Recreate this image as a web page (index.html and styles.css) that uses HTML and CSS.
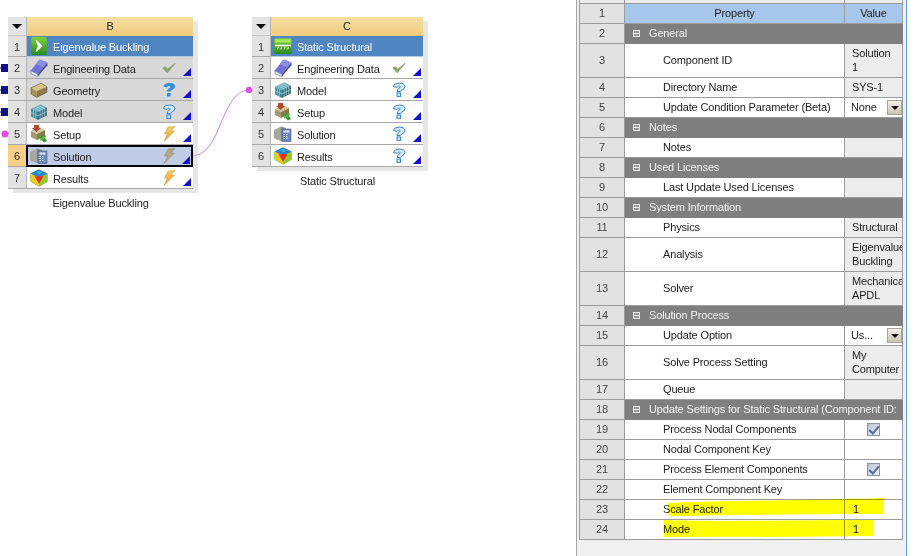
FILE: index.html
```html
<!DOCTYPE html>
<html lang="en">
<head>
<meta charset="utf-8">
<title>Project Schematic</title>
<link rel="stylesheet" href="styles.css">
</head>
<body>
<svg class="defs" width="0" height="0">
  <defs>
    <linearGradient id="gGreen" x1="0" y1="0" x2="0" y2="1"><stop offset="0" stop-color="#7ed03a"/><stop offset="1" stop-color="#2a8a22"/></linearGradient>
    <linearGradient id="gBolt" x1="0" y1="0" x2="0" y2="1"><stop offset="0" stop-color="#f8d070"/><stop offset="1" stop-color="#e49a28"/></linearGradient>
    <symbol id="i-eigen" viewBox="0 0 16 16"><rect x="1" y="0" width="14" height="16" rx="2" fill="url(#gGreen)"/><path d="M5.5 3 L10.5 8 L5.5 13 L7.5 8Z" fill="#fff" stroke="#fff" stroke-width="1"/></symbol>
    <symbol id="i-static" viewBox="0 0 16 16"><rect x="0" y="1" width="16" height="14" rx="2" fill="url(#gGreen)"/><rect x="1" y="2" width="14" height="3" fill="#a8e860"/><path d="M1 7.5H15" stroke="#f4fff0" stroke-width="1.4"/><path d="M3 11l1-2.5M6 11l1-2.5M9 11l1-2.5M12 11l1-2.5" stroke="#e8ffd0" stroke-width="1"/></symbol>
    <symbol id="i-book" viewBox="0 0 16 16"><path d="M0.5 10.5 L8.5 0.5 L15.5 3 L7 13.5 Z" fill="#7272d4"/><path d="M8.5 0.5 L15.5 3 L12 7.5 L5 4.5Z" fill="#8e8ee4"/><path d="M0.5 10.5 L7 13.5 L7 15.6 L1.2 13.4 Z" fill="#eeeef8" stroke="#7070b0" stroke-width=".6"/><path d="M7 13.5 L15.5 3 L15.5 5.5 L7 15.6Z" fill="#4848a0"/></symbol>
    <symbol id="i-geom" viewBox="0 0 16 16"><path d="M1 6 L10 2 L15 5 L6 9Z" fill="#d8c488"/><path d="M1 6 L6 9 L6 14.5 L1 11.5Z" fill="#a8945a"/><path d="M6 9 L15 5 L15 10 L6 14.5Z" fill="#8e7a46"/><path d="M1 6 L10 2 L15 5 V10 L6 14.5 L1 11.5Z" fill="none" stroke="#5c5238" stroke-width=".6"/></symbol>
    <symbol id="i-model" viewBox="0 0 16 16"><path d="M1 5 L9 1 L15 4 L7 8Z" fill="#6ab0c0"/><path d="M1 5 L7 8 L7 15 L1 12Z" fill="#3f8296"/><path d="M7 8 L15 4 L15 11 L7 15Z" fill="#2f6c80"/><path d="M3 4 L9 7M5 3 L11 6M7 2 L13 5M3 6 V13M5 7 V14M9 7 V14M11 6 V13M13 5 V12M1 8.5 L7 11.5 L15 7.5" fill="none" stroke="#c8e4ea" stroke-width=".5"/></symbol>
    <symbol id="i-setup" viewBox="0 0 18 18"><path d="M1 6 L9 2 L15 5 L7 9Z" fill="#d8c898"/><path d="M1 6 L7 9 L7 15 L1 12Z" fill="#a89870"/><path d="M7 9 L15 5 L15 11 L7 15Z" fill="#88784e"/><path d="M4 0 H9 V3 H11 L6.5 7 L2 3 H4Z" fill="#b04a34"/><path d="M9 12 L13 10 L17 16 L14 17.5Z" fill="#3a9a32"/><path d="M10 15 L16 11" stroke="#5cb84a" stroke-width="2"/></symbol>
    <symbol id="i-sol" viewBox="0 0 18 18"><path d="M0 5 L7 1.5 V16 L0 13.5Z" fill="#a8a89c"/><path d="M7 1.5 L12 3 V16 H7Z" fill="#7f8a94"/><rect x="8" y="4" width="9" height="12.5" fill="#6a86bc" stroke="#4a5a90" stroke-width=".6"/><rect x="9.5" y="5.5" width="6" height="2" fill="#dfe8f8"/><path d="M9.5 9.5h1.5M12 9.5h1.5M9.5 11.5h1.5M12 11.5h1.5M9.5 13.5h1.5M12 13.5h1.5" stroke="#e8eef8" stroke-width="1"/></symbol>
    <symbol id="i-res" viewBox="0 0 16 16"><path d="M8 0.5 L15.5 4 L15.5 11 L8 15.5 L0.5 11 L0.5 4Z" fill="#1c8a50"/><path d="M8 0.5 L15.5 4 L8 7.5 L0.5 4Z" fill="#2c80d8"/><path d="M0.5 4 L8 7.5 V15.5 L0.5 11Z" fill="#e8cc20"/><path d="M15.5 4 L8 7.5 V15.5 L15.5 11Z" fill="#9ac828"/><path d="M4 6.5 H12 L8 13Z" fill="#e83020"/><path d="M6 3 L8 1.8 L11 3 L8 4.5Z" fill="#30c8c0"/></symbol>
    <symbol id="i-check" viewBox="0 0 16 16"><path d="M1 8 L6 13.5 L15 2.5 L6.5 9.5 L4 6.5Z" fill="#8ca468" stroke="#8ca468" stroke-width="1"/></symbol>
    <symbol id="i-qf" viewBox="0 0 14 16"><path d="M1.5 4.5 C1.5 0.5 13 -0.5 13 4.5 C13 7.5 9 7.5 8.5 9.5 H5 C5 6.5 8.8 6 8.3 4.7 C7.8 3.7 5.5 4 5 5.5Z" fill="#2f8ee0"/><rect x="5" y="11" width="3.6" height="3.4" fill="#2f8ee0"/></symbol>
    <symbol id="i-qo" viewBox="0 0 14 16"><path d="M1.5 4.5 C1.5 0.5 13 -0.5 13 4.5 C13 7.5 9 7.5 8.5 9.5 H5 C5 6.5 8.8 6 8.3 4.7 C7.8 3.7 5.5 4 5 5.5Z" fill="#d8ecff" stroke="#2f80d0" stroke-width="1"/><rect x="5" y="11" width="3.6" height="3.4" fill="#d8ecff" stroke="#2f80d0" stroke-width="1"/></symbol>
    <symbol id="i-bolt" viewBox="0 0 14 16"><path d="M6 1 L13 0.5 L9 5 L12.5 5 L2 15.5 L5.5 8 L2.5 8Z" fill="url(#gBolt)" stroke="#d09030" stroke-width=".5"/></symbol>
    <symbol id="i-bolt-d" viewBox="0 0 14 16"><path d="M6 1 L13 0.5 L9 5 L12.5 5 L2 15.5 L5.5 8 L2.5 8Z" fill="#b0a888" stroke="#8c8468" stroke-width=".5"/></symbol>
  </defs>
</svg>

<main class="stage">
  <section class="schematic">
    <div class="system sys-b">
      <div class="node">
        <div class="row head"><div class="num"><i class="tri"></i></div><div class="title">B</div></div>
        <div class="row first"><div class="num">1</div><div class="main"><svg class="ic"><use href="#i-eigen"/></svg><span class="lab">Eigenvalue Buckling</span></div></div>
        <div class="row grey"><div class="num">2</div><div class="main"><svg class="ic"><use href="#i-book"/></svg><span class="lab">Engineering Data</span><svg class="st"><use href="#i-check"/></svg><i class="cor"></i></div></div>
        <div class="row grey"><div class="num">3</div><div class="main"><svg class="ic"><use href="#i-geom"/></svg><span class="lab">Geometry</span><svg class="st"><use href="#i-qf"/></svg><i class="cor"></i></div></div>
        <div class="row grey"><div class="num">4</div><div class="main"><svg class="ic"><use href="#i-model"/></svg><span class="lab">Model</span><svg class="st"><use href="#i-qo"/></svg><i class="cor"></i></div></div>
        <div class="row"><div class="num">5</div><div class="main"><svg class="ic"><use href="#i-setup"/></svg><span class="lab">Setup</span><svg class="st"><use href="#i-bolt"/></svg><i class="cor"></i></div></div>
        <div class="row sel"><div class="num">6</div><div class="main"><svg class="ic"><use href="#i-sol"/></svg><span class="lab">Solution</span><svg class="st"><use href="#i-bolt-d"/></svg><i class="cor"></i></div></div>
        <div class="row"><div class="num">7</div><div class="main"><svg class="ic"><use href="#i-res"/></svg><span class="lab">Results</span><svg class="st"><use href="#i-bolt"/></svg><i class="cor"></i></div></div>
      </div>
      <div class="caption">Eigenvalue Buckling</div>
    </div>

    <div class="system sys-c">
      <div class="node">
        <div class="row head"><div class="num"><i class="tri"></i></div><div class="title">C</div></div>
        <div class="row first"><div class="num">1</div><div class="main"><svg class="ic"><use href="#i-static"/></svg><span class="lab">Static Structural</span></div></div>
        <div class="row"><div class="num">2</div><div class="main"><svg class="ic"><use href="#i-book"/></svg><span class="lab">Engineering Data</span><svg class="st"><use href="#i-check"/></svg><i class="cor"></i></div></div>
        <div class="row"><div class="num">3</div><div class="main"><svg class="ic"><use href="#i-model"/></svg><span class="lab">Model</span><svg class="st"><use href="#i-qo"/></svg><i class="cor"></i></div></div>
        <div class="row"><div class="num">4</div><div class="main"><svg class="ic"><use href="#i-setup"/></svg><span class="lab">Setup</span><svg class="st"><use href="#i-qo"/></svg><i class="cor"></i></div></div>
        <div class="row"><div class="num">5</div><div class="main"><svg class="ic"><use href="#i-sol"/></svg><span class="lab">Solution</span><svg class="st"><use href="#i-qo"/></svg><i class="cor"></i></div></div>
        <div class="row"><div class="num">6</div><div class="main"><svg class="ic"><use href="#i-res"/></svg><span class="lab">Results</span><svg class="st"><use href="#i-qo"/></svg><i class="cor"></i></div></div>
      </div>
      <div class="caption">Static Structural</div>
    </div>

    <svg class="wires" width="576" height="556">
      <path class="wire-blue" d="M0 68H8M0 90H8M0 112H8"/>
      <rect class="sq" x="1" y="64" width="7" height="8"/>
      <rect class="sq" x="1" y="86" width="7" height="8"/>
      <rect class="sq" x="1" y="108" width="7" height="8"/>
      <path class="wire-pink" d="M193 156 C212 154 218 128 224 116 C230 102 238 90 248 90"/>
      <path class="wire-pink-s" d="M5 134H8M248 90H252"/>
      <circle class="dot" cx="5" cy="134" r="3.5"/>
      <circle class="dot" cx="249" cy="90" r="3.2"/>
    </svg>
  </section>

  <section class="panel">
    <table class="props">
      <colgroup><col class="c-num"><col class="c-prop"><col class="c-val"></colgroup>
      <tbody>
        <tr class="r-top"><td class="n"></td><td></td><td></td></tr>
        <tr class="r-head"><td class="n">1</td><td class="h">Property</td><td class="h">Value</td></tr>
        <tr class="r-group"><td class="n">2</td><td colspan="2" class="g"><i class="minus"></i>General</td></tr>
        <tr class="r-tall"><td class="n">3</td><td class="p">Component ID</td><td class="v">Solution<br>1</td></tr>
        <tr><td class="n">4</td><td class="p">Directory Name</td><td class="v">SYS-1</td></tr>
        <tr><td class="n">5</td><td class="p">Update Condition Parameter (Beta)</td><td class="w"><div class="drop"><span>None</span><i class="btn"></i></div></td></tr>
        <tr class="r-group"><td class="n">6</td><td colspan="2" class="g"><i class="minus"></i>Notes</td></tr>
        <tr><td class="n">7</td><td class="p">Notes</td><td class="v"></td></tr>
        <tr class="r-group"><td class="n">8</td><td colspan="2" class="g"><i class="minus"></i>Used Licenses</td></tr>
        <tr><td class="n">9</td><td class="p">Last Update Used Licenses</td><td class="v"></td></tr>
        <tr class="r-group"><td class="n">10</td><td colspan="2" class="g"><i class="minus"></i>System Information</td></tr>
        <tr><td class="n">11</td><td class="p">Physics</td><td class="v">Structural</td></tr>
        <tr class="r-tall"><td class="n">12</td><td class="p">Analysis</td><td class="v">Eigenvalue<br>Buckling</td></tr>
        <tr class="r-tall"><td class="n">13</td><td class="p">Solver</td><td class="v">Mechanical<br>APDL</td></tr>
        <tr class="r-group"><td class="n">14</td><td colspan="2" class="g"><i class="minus"></i>Solution Process</td></tr>
        <tr><td class="n">15</td><td class="p">Update Option</td><td class="w"><div class="drop"><span>Us...</span><i class="btn"></i></div></td></tr>
        <tr class="r-tall"><td class="n">16</td><td class="p">Solve Process Setting</td><td class="v">My<br>Computer</td></tr>
        <tr><td class="n">17</td><td class="p">Queue</td><td class="v"></td></tr>
        <tr class="r-group"><td class="n">18</td><td colspan="2" class="g"><i class="minus"></i><span class="clip">Update Settings for Static Structural (Component ID:</span></td></tr>
        <tr><td class="n">19</td><td class="p">Process Nodal Components</td><td class="w ctr"><i class="chk"></i></td></tr>
        <tr><td class="n">20</td><td class="p">Nodal Component Key</td><td class="w"></td></tr>
        <tr><td class="n">21</td><td class="p">Process Element Components</td><td class="w ctr"><i class="chk"></i></td></tr>
        <tr><td class="n">22</td><td class="p">Element Component Key</td><td class="w"></td></tr>
        <tr><td class="n">23</td><td class="p">Scale Factor</td><td class="w t">1</td></tr>
        <tr><td class="n">24</td><td class="p">Mode</td><td class="w t">1</td></tr>
      </tbody>
    </table>
    <svg class="marker" width="330" height="60" viewBox="0 0 330 60">
      <path d="M90 5 C140 3 240 2 307 0 L307 16 C230 16 150 17 92 18Z"/>
      <path d="M87 22 C140 24 220 22 296 22 L296 38 C220 39 150 39 87 39Z"/>
    </svg>
  </section>
</main>
</body>
</html>
```

FILE: styles.css
```css
* { box-sizing: border-box; }
html, body { margin: 0; padding: 0; height: 100%; overflow: hidden; background: #fff; }
body { font-family: "Liberation Sans", Arial, sans-serif; font-size: 11px; letter-spacing: -0.15px; color: #1c1c1c; }
.defs { position: absolute; }
.stage { display: flex; width: 921px; height: 556px; }

/* schematic canvas */
.schematic { position: relative; flex: 0 0 576px; height: 556px; }
.wires { position: absolute; left: 0; top: 0; pointer-events: none; }
.wire-blue { stroke: #10108a; stroke-width: 1; fill: none; }
.sq { fill: #10108a; }
.wire-pink { stroke: #dc9ae4; stroke-width: 1.2; fill: none; }
.wire-pink-s { stroke: #e040e0; stroke-width: 1; }
.dot { fill: #e24ce2; }

.system { position: absolute; top: 17px; }
.sys-b { left: 8px; width: 185px; }
.sys-c { left: 252px; width: 171px; }
.node { box-shadow: 5px 4px 0 #e6e6e6; background: #fff; }
.row { display: flex; height: 22px; }
.num {
  flex: 0 0 19px; display: flex; align-items: center; justify-content: center;
  background: #e2e2e2; border-bottom: 1px solid #a8a8a8; border-right: 1px solid #b4b4b4;
  color: #333; padding-top: 1px;
}
.main {
  flex: 1; position: relative; display: flex; align-items: center; min-width: 0;
  border-bottom: 1px solid #a8a8a8; padding-left: 3px; background: #fff;
}
.head { height: 19px; }
.head .num { background: #e4e4e4; border-bottom-color: #c8c8c8; padding-top: 0; }
.tri { width: 0; height: 0; border-left: 5px solid transparent; border-right: 5px solid transparent; border-top: 5px solid #000; }
.title {
  flex: 1; text-align: center; line-height: 19px; color: #222;
  background: linear-gradient(#f6e0a4, #f2cb7c);
}
.first { height: 21px; }
.first .main { background: #4f86c2; color: #fff; border-bottom: 1px solid #b8c8d8; }
.grey .main { background: #d8d8d8; }
.sel .num { background: #f5cf85; }
.sel .main { background: #c0cbe6; border: 2px solid #000; padding-left: 2px; margin-left: -1px; }
.sel .cor { right: 1px; bottom: 1px; }
.ic { width: 18px; height: 18px; flex: none; margin-right: 5px; }
.lab { flex: 1; white-space: nowrap; padding-top: 3px; }
.first .lab, .sel .lab { padding-top: 1px; }
.st { width: 14px; height: 16px; flex: none; margin-right: 17px; }
.cor {
  position: absolute; right: 2px; bottom: 2px; width: 0; height: 0;
  border-left: 8px solid transparent; border-bottom: 8px solid #1010c8;
}
.sel .st { margin-right: 15px; }
.caption { text-align: center; margin-top: 6px; line-height: 16px; color: #222; }

/* properties panel */
.panel {
  position: relative; flex: 0 0 331px; height: 556px; background: #f0f0f0;
  border-left: 1px solid #a6a6a6; border-right: 1px solid #5c9ed8; padding-left: 2px;
}
.props { border-collapse: collapse; table-layout: fixed; width: 323px; background: #fff; }
.c-num { width: 45px; }
.c-prop { width: 220px; }
.c-val { width: 58px; }
.props td {
  border: 1px solid #9c9c9c; height: 20px; padding: 0; overflow: hidden; white-space: nowrap;
  line-height: 14px;
}
.props .r-top td { height: 3px; line-height: 0; font-size: 0; background: #ececec; border-top: 0; }
.props .r-tall td { height: 34px; }
.n { background: #e2e2e2; text-align: center; color: #444; }
.h { background: #a6c6ec; text-align: center; }
.g { background: #7f7f7f; color: #f4f4f4; padding-left: 8px !important; border-color: #7f7f7f !important; }
.minus {
  display: inline-block; width: 7px; height: 7px; margin-right: 9px; vertical-align: 0;
  background: linear-gradient(#f2f2f2, #f2f2f2) center / 5px 1px no-repeat, #9a9a9a;
  border: 1px solid #e8e8e8;
}
.clip { display: inline-block; width: 253px; overflow: hidden; vertical-align: bottom; }
.props .p { padding-left: 38px; }
.props .v { background: #ececec; padding-left: 7px; }
.props .w { padding-left: 0; }
.props .t { padding-left: 8px; }
.ctr { text-align: center; }
.drop { display: flex; align-items: center; justify-content: space-between; padding-left: 6px; }
.btn {
  width: 15px; height: 15px; position: relative; display: block;
  background: linear-gradient(#f4f2ea, #c8c4b4); border: 1px solid #a8a498;
}
.btn::after {
  content: ""; position: absolute; left: 3px; top: 5px; width: 0; height: 0;
  border-left: 4px solid transparent; border-right: 4px solid transparent; border-top: 4px solid #111;
}
.chk {
  display: inline-block; width: 13px; height: 13px; vertical-align: middle; position: relative;
  background: linear-gradient(135deg, #b8c0d4, #eef0f6); border: 1px solid #8c94a8;
}
.chk::after {
  content: ""; position: absolute; left: 3px; top: 0; width: 4px; height: 8px;
  border: solid #5a6a98; border-width: 0 2px 2px 0; transform: rotate(40deg);
}
.marker { position: absolute; left: 0; top: 498px; mix-blend-mode: multiply; pointer-events: none; }
.marker path { fill: #ffff00; }
```
